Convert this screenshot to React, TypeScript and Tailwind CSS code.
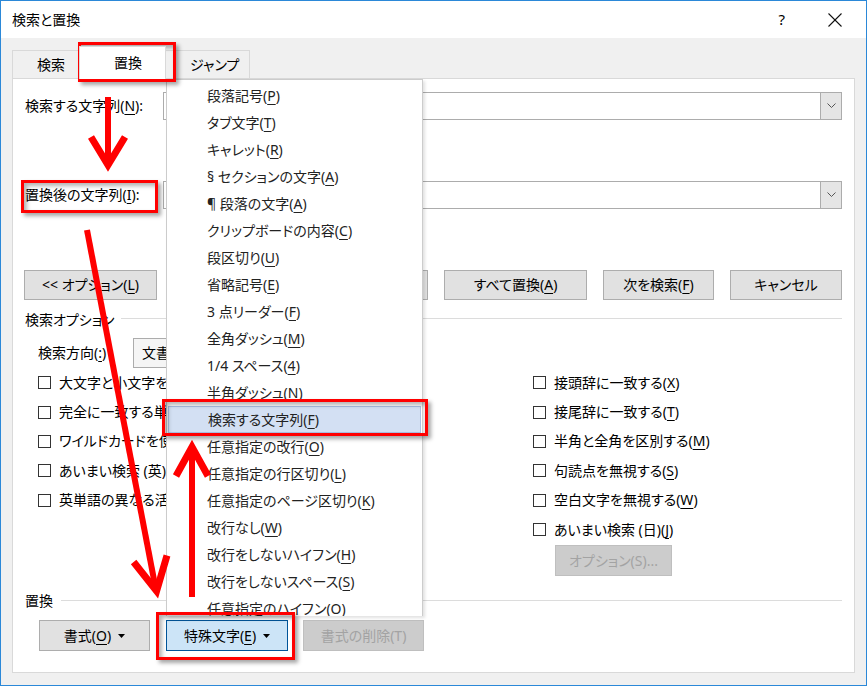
import React from "react";

const U = ({ children }: { children: React.ReactNode }) => (
  <span className="underline underline-offset-[3px] decoration-1">{children}</span>
);

const Chevron = () => (
  <svg width="9" height="6" viewBox="0 0 9 6">
    <polyline points="0.5,0.5 4.5,4.5 8.5,0.5" fill="none" stroke="#555" strokeWidth="1" />
  </svg>
);

const Tri = ({ color = "#000" }: { color?: string }) => (
  <svg width="7" height="4" viewBox="0 0 7 4" className="ml-[7px]">
    <polygon points="0,0 7,0 3.5,4" fill={color} />
  </svg>
);

function Combo({ className = "" }: { className?: string }) {
  return (
    <div className={"h-[28px] flex border border-[#acacac] bg-white " + className}>
      <div className="flex-1" />
      <div className="w-[21px] bg-[#e5e5e5] border-l border-[#acacac] flex items-center justify-center">
        <Chevron />
      </div>
    </div>
  );
}

function Btn({ children, className = "" }: { children: React.ReactNode; className?: string }) {
  return (
    <div
      className={
        "h-[30px] shrink-0 flex items-center justify-center bg-[#e1e1e1] border border-[#adadad] " + className
      }
    >
      {children}
    </div>
  );
}

function DisBtn({ children, className = "" }: { children: React.ReactNode; className?: string }) {
  return (
    <div
      className={
        "h-[31px] shrink-0 flex items-center justify-center bg-[#cccccc] border border-[#bfbfbf] text-[#a3a3a3] " +
        className
      }
    >
      {children}
    </div>
  );
}

function Check({ children }: { children: React.ReactNode }) {
  return (
    <div className="h-[29.4px] flex items-center whitespace-nowrap">
      <div className="w-[13px] h-[13px] border border-[#333333] bg-white shrink-0" />
      <span className="ml-[8px]">{children}</span>
    </div>
  );
}

const menuItems: [string, string, string][] = [
  ["段落記号(", "P", ")"],
  ["タブ文字(", "T", ")"],
  ["キャレット(", "R", ")"],
  ["§ セクションの文字(", "A", ")"],
  ["¶ 段落の文字(", "A", ")"],
  ["クリップボードの内容(", "C", ")"],
  ["段区切り(", "U", ")"],
  ["省略記号(", "E", ")"],
  ["3 点リーダー(", "F", ")"],
  ["全角ダッシュ(", "M", ")"],
  ["1/4 スペース(", "4", ")"],
  ["半角ダッシュ(", "N", ")"],
  ["検索する文字列(", "F", ")"],
  ["任意指定の改行(", "O", ")"],
  ["任意指定の行区切り(", "L", ")"],
  ["任意指定のページ区切り(", "K", ")"],
  ["改行なし(", "W", ")"],
  ["改行をしないハイフン(", "H", ")"],
  ["改行をしないスペース(", "S", ")"],
  ["任意指定のハイフン(", "O", ")"],
];

const redBox =
  "absolute border-[3px] border-[#ff0000] shadow-[3px_3px_4px_rgba(0,0,0,0.35),inset_3px_3px_4px_rgba(0,0,0,0.3)] pointer-events-none";

export default function App() {
  return (
    <div className="relative w-[867px] h-[686px] overflow-hidden font-['Noto_Sans','Noto_Sans_CJK_JP',sans-serif] [font-feature-settings:'palt'] text-[14px] text-black leading-none">
      <div className="w-full h-full flex flex-col bg-[#f0f0f0] border border-[#2b88d8]">
        {/* title bar */}
        <div className="h-[37px] shrink-0 bg-white flex items-center pl-[11px]">
          <span>検索と置換</span>
          <span className="ml-auto text-[15px] mr-[43px]">?</span>
          <svg width="14" height="14" viewBox="0 0 14 14" className="mr-[24px]">
            <line x1="0.5" y1="0.5" x2="13.5" y2="13.5" stroke="#111" strokeWidth="1.1" />
            <line x1="13.5" y1="0.5" x2="0.5" y2="13.5" stroke="#111" strokeWidth="1.1" />
          </svg>
        </div>

        {/* tabs */}
        <div className="h-[40px] shrink-0 flex items-end pl-[11px]">
          <div className="w-[67px] h-[28px] flex items-center pl-[24px] border border-b-0 border-[#d9d9d9] bg-[#f0f0f0]">
            検索
          </div>
          <div className="relative z-10 w-[87px] h-[33px] -mb-[1px] flex items-center pl-[34px] border border-b-0 border-[#d9d9d9] bg-white">
            置換
          </div>
          <div className="w-[84px] h-[28px] flex items-center pl-[24px] border border-b-0 border-l-0 border-[#d9d9d9] bg-[#f0f0f0]">
            ジャンプ
          </div>
        </div>

        {/* panel */}
        <div className="ml-[11px] w-[843px] h-[595px] shrink-0 bg-white border border-[#d9d9d9] flex flex-col px-[12px]">
          <div className="mt-[13px] flex items-center">
            <div className="w-[138px] shrink-0 whitespace-nowrap">
              検索する文字列(<U>N</U>):
            </div>
            <Combo className="flex-1" />
          </div>
          <div className="mt-[61px] flex items-center">
            <div className="w-[138px] shrink-0 whitespace-nowrap">
              置換後の文字列(<U>I</U>):
            </div>
            <Combo className="flex-1" />
          </div>

          <div className="mt-[61px] flex">
            <Btn className="w-[133px] -ml-[1px]">
              &lt;&lt; オプション(<U>L</U>)
            </Btn>
            <Btn className="w-[111px] ml-[160px]">
              置換(<U>R</U>)
            </Btn>
            <Btn className="w-[143px] ml-[16px]">
              すべて置換(<U>A</U>)
            </Btn>
            <Btn className="w-[111px] ml-[16px]">
              次を検索(<U>F</U>)
            </Btn>
            <Btn className="w-[112px] ml-[16px]">キャンセル</Btn>
          </div>

          <div className="mt-[10px] h-[20px] flex items-center">
            <span>検索オプション</span>
            <div className="flex-1 ml-[6px] border-t border-[#dcdcdc] -mt-[4px]" />
          </div>

          <div className="mt-[8px] h-[30px] flex items-center pl-[13px]">
            <div className="w-[95px] shrink-0">
              検索方向(<U>:</U>)
            </div>
            <div className="w-[170px] h-[30px] border border-[#acacac] bg-[#f5f5f5] flex items-center pl-[8px]">
              文書全体
            </div>
          </div>

          <div className="flex pl-[13px]">
            <div className="w-[495px] shrink-0 flex flex-col">
              <Check>大文字と小文字を区別する(H)</Check>
              <Check>完全に一致する単語だけを検索する(Y)</Check>
              <Check>ワイルドカードを使用する(U)</Check>
              <Check>あいまい検索 (英)(K)</Check>
              <Check>英単語の異なる活用形も検索する(W)</Check>
            </div>
            <div className="flex flex-col">
              <Check>
                接頭辞に一致する(<U>X</U>)
              </Check>
              <Check>
                接尾辞に一致する(<U>T</U>)
              </Check>
              <Check>
                半角と全角を区別する(<U>M</U>)
              </Check>
              <Check>
                句読点を無視する(<U>S</U>)
              </Check>
              <Check>
                空白文字を無視する(<U>W</U>)
              </Check>
              <Check>
                あいまい検索 (日)(<U>J</U>)
              </Check>
              <DisBtn className="w-[117px] ml-[22px] mt-[1px]">オプション(S)...</DisBtn>
            </div>
          </div>

          <div className="mt-[15px] h-[20px] flex items-center">
            <span>置換</span>
            <div className="flex-1 ml-[8px] border-t border-[#dcdcdc] -mt-[2px]" />
          </div>

          <div className="mt-[9px] flex pl-[14px]">
            <Btn className="w-[111px] h-[31px]">
              書式(<U>O</U>)
              <Tri />
            </Btn>
            <div className="ml-[16px] w-[122px] h-[31px] flex items-center justify-center bg-[#cce4f7] border border-[#005499]">
              特殊文字(<U>E</U>)
              <Tri />
            </div>
            <DisBtn className="ml-[15px] w-[121px]">書式の削除(T)</DisBtn>
          </div>
        </div>
      </div>

      {/* dropdown menu */}
      <div className="absolute left-[166px] top-[79px] w-[257px] h-[537px] overflow-hidden bg-white border border-b-0 border-[#cccccc] pt-[2px] shadow-[2px_2px_3px_rgba(0,0,0,0.12)]">
        {menuItems.map(([a, k, b], i) =>
          i === 12 ? (
            <div
              key={i}
              className="mx-[1px] h-[27px] flex items-center pl-[39px] bg-[#d3e0f3] border border-[#a9c1e4] text-[#222]"
            >
              {a}
              <U>{k}</U>
              {b}
            </div>
          ) : (
            <div key={i} className="h-[27px] flex items-center pl-[40px] text-[#222] whitespace-nowrap">
              {a}
              <U>{k}</U>
              {b}
            </div>
          )
        )}
      </div>

      {/* red annotation boxes */}
      <div className={redBox + " left-[78px] top-[42px] w-[98px] h-[40px]"} />
      <div className={redBox + " left-[21px] top-[180px] w-[137px] h-[33px]"} />
      <div className={redBox + " left-[156px] top-[612px] w-[139px] h-[48px]"} />
      <div className={redBox + " left-[162px] top-[399px] w-[266px] h-[37px]"} />

      {/* arrows */}
      <svg className="absolute left-0 top-0 pointer-events-none" width="867" height="686" viewBox="0 0 867 686">
        <g fill="none" stroke="#ff0000" strokeLinejoin="miter" strokeMiterlimit="6">
          <line x1="108" y1="97" x2="108" y2="162" strokeWidth="6" />
          <polyline points="91,137 108,165 125,137" strokeWidth="7" />

          <line x1="87" y1="230" x2="155" y2="585" strokeWidth="6" />
          <polyline points="133.6,562 156.6,591 167,555.5" strokeWidth="7" />

          <line x1="192" y1="597" x2="192" y2="452" strokeWidth="6" />
          <polyline points="176,476 192,447 208,476" strokeWidth="7" />
        </g>
      </svg>
    </div>
  );
}
